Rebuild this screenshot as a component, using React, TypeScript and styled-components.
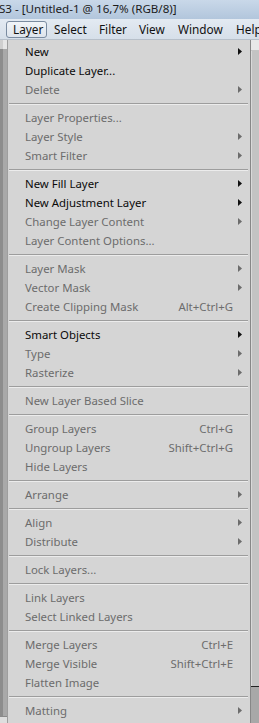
import React from "react";
import styled, { createGlobalStyle } from "styled-components";

const GlobalStyle = createGlobalStyle`
  html, body { margin: 0; padding: 0; background: #bdbdbd; }
  body { font-family: "Noto Sans", "Open Sans", sans-serif; }
  * { box-sizing: border-box; }
`;

const Screen = styled.div`
  width: 259px;
  height: 723px;
  overflow: hidden;
  display: flex;
  flex-direction: column;
  background: #bdbdbd;
`;

const TitleBar = styled.div`
  height: 19px;
  flex: none;
  background: linear-gradient(#c9d8e9, #b2c6dc);
  color: #1b1b1b;
  font-size: 11.6px;
  line-height: 17px;
  white-space: nowrap;
  overflow: hidden;
  text-indent: -1px;
`;

const MenuBar = styled.div`
  height: 21px;
  flex: none;
  display: flex;
  align-items: center;
  background: linear-gradient(#e3eaf2, #d6dfe9);
  border-bottom: 1px solid #b7c0ca;
  padding-left: 6px;
  white-space: nowrap;
  overflow: hidden;
`;

const BarItem = styled.div<{ $active?: boolean; $w: number }>`
  flex: none;
  width: ${(p) => p.$w}px;
  height: 17px;
  display: flex;
  align-items: center;
  padding-left: 6px;
  font-size: 11.8px;
  color: #111;
  border-radius: 3px;
  border: 1px solid ${(p) => (p.$active ? "#7a8ba0" : "transparent")};
  background: ${(p) =>
    p.$active ? "linear-gradient(#f1f4f8, #dde4ec)" : "transparent"};
`;

const Body = styled.div`
  flex: 1;
  display: flex;
  min-height: 0;
`;

const LeftStrip = styled.div`
  width: 7px;
  flex: none;
  display: flex;
  flex-direction: column;
`;

const StripTop = styled.div`
  height: 9px;
  background: #e6e6e6;
  border-left: 3px solid #cfcfcf;
`;

const StripMid = styled.div`
  flex: 1;
  background: #a9a9a9;
  border-left: 3px solid #8d8d8d;
`;

const StripBottom = styled.div`
  height: 7px;
  background: #dedede;
  border-top: 1px solid #8a8a8a;
`;

const RightStrip = styled.div`
  flex: 1;
  display: flex;
  flex-direction: column;
`;

const RightTop = styled.div`
  height: 11px;
  background: #e8e8e8;
  border-bottom: 1px solid #c4c4c4;
`;

const RightMid = styled.div`
  flex: 1;
  background: #c3c3c3;
  border-left: 1px solid #d9d9d9;
`;

const RightLower = styled.div`
  height: 37px;
  background: #a8a8a8;
  border-top: 1px solid #222;
`;

const Menu = styled.div`
  width: 244px;
  flex: none;
  background: #d5d5d5;
  border-left: 1px solid #9e9e9e;
  border-right: 1px solid #878787;
  padding-top: 2px;
  display: flex;
  flex-direction: column;
`;

const Item = styled.div<{ $enabled?: boolean }>`
  height: 19px;
  flex: none;
  display: grid;
  grid-template-columns: 1fr auto 17px;
  align-items: center;
  padding-left: 17px;
  font-size: 11.4px;
  line-height: 19px;
  white-space: nowrap;
  color: ${(p) => (p.$enabled ? "#0a0a0a" : "#6c6c6c")};
`;

const Shortcut = styled.span`
  text-align: right;
`;

const ArrowBox = styled.span`
  display: flex;
  align-items: center;
  padding-left: 5px;
`;

const Separator = styled.div`
  height: 9px;
  flex: none;
  display: flex;
  align-items: center;
  padding: 0 2px 0 1px;
  &::before {
    content: "";
    display: block;
    width: 100%;
    height: 1px;
    background: #9d9d9d;
    box-shadow: 0 1px 0 #ececec;
  }
`;

type Entry =
  | { sep: true }
  | { label: string; enabled?: boolean; sub?: boolean; key?: string };

const entries: Entry[] = [
  { label: "New", enabled: true, sub: true },
  { label: "Duplicate Layer...", enabled: true },
  { label: "Delete", sub: true },
  { sep: true },
  { label: "Layer Properties..." },
  { label: "Layer Style", sub: true },
  { label: "Smart Filter", sub: true },
  { sep: true },
  { label: "New Fill Layer", enabled: true, sub: true },
  { label: "New Adjustment Layer", enabled: true, sub: true },
  { label: "Change Layer Content", sub: true },
  { label: "Layer Content Options..." },
  { sep: true },
  { label: "Layer Mask", sub: true },
  { label: "Vector Mask", sub: true },
  { label: "Create Clipping Mask", key: "Alt+Ctrl+G" },
  { sep: true },
  { label: "Smart Objects", enabled: true, sub: true },
  { label: "Type", sub: true },
  { label: "Rasterize", sub: true },
  { sep: true },
  { label: "New Layer Based Slice" },
  { sep: true },
  { label: "Group Layers", key: "Ctrl+G" },
  { label: "Ungroup Layers", key: "Shift+Ctrl+G" },
  { label: "Hide Layers" },
  { sep: true },
  { label: "Arrange", sub: true },
  { sep: true },
  { label: "Align", sub: true },
  { label: "Distribute", sub: true },
  { sep: true },
  { label: "Lock Layers..." },
  { sep: true },
  { label: "Link Layers" },
  { label: "Select Linked Layers" },
  { sep: true },
  { label: "Merge Layers", key: "Ctrl+E" },
  { label: "Merge Visible", key: "Shift+Ctrl+E" },
  { label: "Flatten Image" },
  { sep: true },
  { label: "Matting", sub: true },
];

const Arrow = ({ color }: { color: string }) => (
  <svg width="4" height="7" viewBox="0 0 4 7">
    <polygon points="0,0 4,3.5 0,7" fill={color} />
  </svg>
);

const barItems = [
  { label: "Layer", w: 41, active: true },
  { label: "Select", w: 45 },
  { label: "Filter", w: 40 },
  { label: "View", w: 39 },
  { label: "Window", w: 58 },
  { label: "Help", w: 40 },
];

export default function App() {
  return (
    <>
      <GlobalStyle />
      <Screen>
        <TitleBar>S3 - [Untitled-1 @ 16,7% (RGB/8)]</TitleBar>
        <MenuBar>
          {barItems.map((b) => (
            <BarItem key={b.label} $active={b.active} $w={b.w}>
              {b.label}
            </BarItem>
          ))}
        </MenuBar>
        <Body>
          <LeftStrip>
            <StripTop />
            <StripMid />
            <StripBottom />
          </LeftStrip>
          <Menu>
            {entries.map((e, i) =>
              "sep" in e ? (
                <Separator key={i} />
              ) : (
                <Item key={i} $enabled={e.enabled}>
                  <span>{e.label}</span>
                  <Shortcut>{e.key ?? ""}</Shortcut>
                  <ArrowBox>
                    {e.sub && <Arrow color={e.enabled ? "#111" : "#6c6c6c"} />}
                  </ArrowBox>
                </Item>
              )
            )}
          </Menu>
          <RightStrip>
            <RightTop />
            <RightMid />
            <RightLower />
          </RightStrip>
        </Body>
      </Screen>
    </>
  );
}
